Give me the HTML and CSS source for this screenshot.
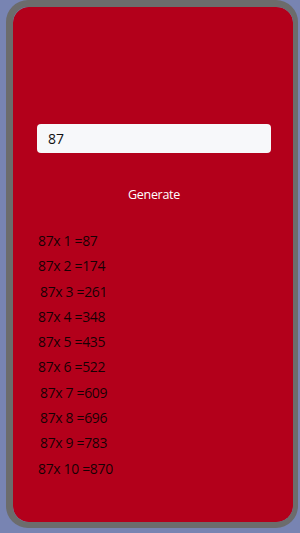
FILE: index.html
```html
<!DOCTYPE html>
<html lang="en">
<head>
    <meta charset="UTF-8">
    <meta name="viewport" content="width=device-width, initial-scale=1.0">
    <title>Multiplication Table</title>
    <link rel="stylesheet" href="styles.css">
</head>
<body>
    <div class="frame">
        <div class="card">
            <input type="number" class="number-input" value="87">
            <button class="btn generate">Generate</button>
            <div class="table">
                <div class="row">87x 1 =87</div>
                <div class="row">87x 2 =174</div>
                <div class="row">87x 3 =261</div>
                <div class="row">87x 4 =348</div>
                <div class="row">87x 5 =435</div>
                <div class="row">87x 6 =522</div>
                <div class="row">87x 7 =609</div>
                <div class="row">87x 8 =696</div>
                <div class="row">87x 9 =783</div>
                <div class="row">87x 10 =870</div>
            </div>
        </div>
    </div>
</body>
</html>
```

FILE: styles.css
```css
body {
    margin: 0;
    background: #7884b2;
    font-family: "Open Sans", "Noto Sans", sans-serif;
}
.frame {
    width: 280px;
    height: 515px;
    margin-left: 6px;
    border: solid #6c6c6c;
    border-width: 7px 5px 6px 7px;
    border-radius: 22px;
    overflow: hidden;
}
.card {
    height: 100%;
    background: #b3001b;
    border-radius: 16px;
    display: flex;
    flex-direction: column;
    padding: 117px 22px 0 24px;
    box-sizing: border-box;
}
.number-input {
    height: 29px;
    box-sizing: border-box;
    border: none;
    border-radius: 4px;
    background: #f7f8fa;
    padding: 0 11px;
    font-family: inherit;
    font-size: 14px;
    color: #111;
    outline: none;
}
.btn {
    background: none;
    border: none;
    color: #fff;
    font-family: inherit;
    font-size: 12.5px;
    letter-spacing: -0.3px;
    padding: 0;
    margin: 33px auto 0;
    height: 18px;
    line-height: 18px;
    cursor: pointer;
}
.table {
    margin-top: 24px;
    padding-left: 1px;
}
.row {
    height: 25.3px;
    line-height: 25.3px;
    font-size: 14px;
    letter-spacing: -0.35px;
    color: rgba(0, 0, 0, 0.88);
}
.row:nth-child(3),
.row:nth-child(7),
.row:nth-child(8),
.row:nth-child(9) { padding-left: 2px; }
```
